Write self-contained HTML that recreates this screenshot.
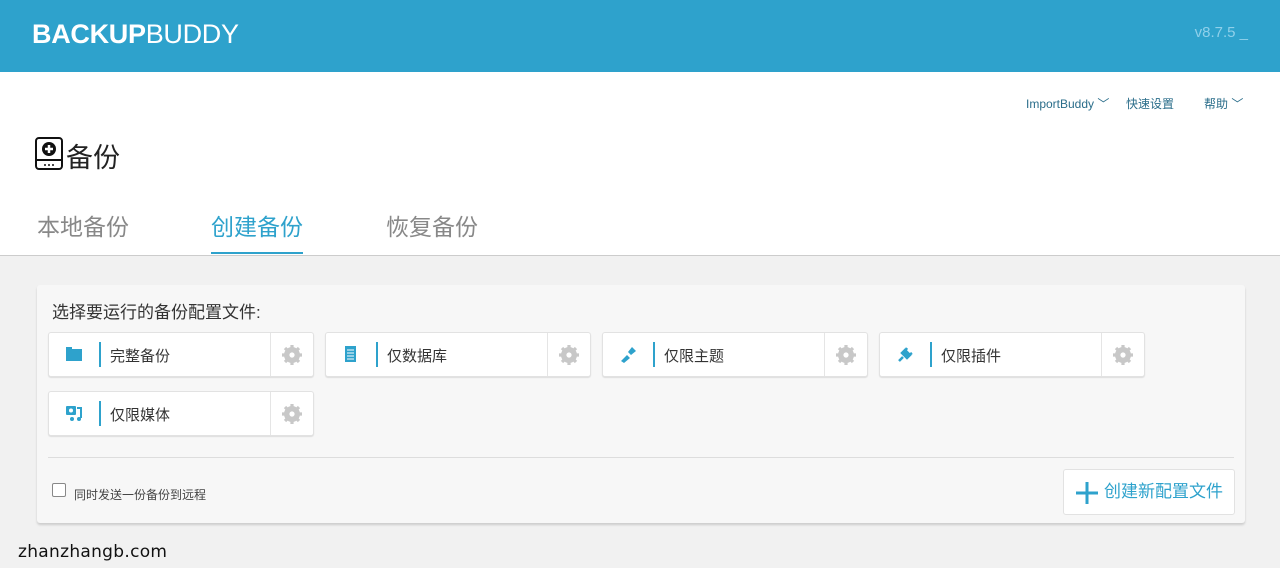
<!DOCTYPE html><html><head><meta charset="utf-8"><style>
body{margin:0;width:1280px;height:568px;overflow:hidden;background:#f1f1f1;font-family:"Liberation Sans","Noto Sans CJK SC",sans-serif;position:relative}
.hd{position:absolute;left:0;top:0;width:1280px;height:72px;background:#2ea2cc}
.logo{position:absolute;left:32px;top:19px;color:#fff;font-size:27px;letter-spacing:-0.3px}
.logo b{font-weight:900}
.ver{position:absolute;right:32px;top:24px;color:#8fd0ea;font-size:15px}
.wh{position:absolute;left:0;top:72px;width:1280px;height:183px;background:#fff;border-bottom:1px solid #ccc}
.nav{position:absolute;top:23px;font-size:12px;color:#2a6d8a}
.ttl{position:absolute;left:66px;font-size:27px;color:#222}
.tab{position:absolute;font-size:23px;color:#888}
.tab.a{color:#2ea2cc;border-bottom:2px solid #2ea2cc;padding-bottom:10px}
.pn{position:absolute;left:37px;top:285px;width:1208px;height:238px;background:#f7f7f7;border-radius:3px;box-shadow:0 2px 2px #ccc}
.pt{position:absolute;left:15px;top:13px;font-size:17px;color:#333}
.b{position:absolute;width:264px;height:43px;background:#fff;border:1px solid #e2e2e2;border-radius:3px;box-shadow:0 1px 1px #ddd}
.b .ic{position:absolute;left:16px;top:12px;width:18px;height:18px}
.b .bar{position:absolute;left:50px;top:9px;width:2px;height:25px;background:#2ea2cc}
.b .t{position:absolute;left:61px;top:12px;font-size:15px;color:#333}
.b .g{position:absolute;right:0;top:0;width:42px;height:43px;border-left:1px solid #e5e5e5}
.b .g svg{position:absolute;left:11px;top:12px}
.ln{position:absolute;left:11px;top:172px;width:1186px;height:1px;background:#ddd}
.cb{position:absolute;left:15px;top:198px;width:12px;height:12px;border:1px solid #888;border-radius:2px;background:#fff}
.cbt{position:absolute;left:37px;top:201px;font-size:12px;color:#444}
.cr{position:absolute;left:1026px;top:184px;width:170px;height:44px;background:#fff;border:1px solid #e2e2e2;border-radius:3px;color:#2ea2cc;font-size:17px;line-height:44px}
.wm{position:absolute;left:18px;top:542px;font-size:17px;color:#111;font-family:"DejaVu Sans",sans-serif;letter-spacing:0.3px}
</style></head><body>
<svg width="0" height="0" style="position:absolute"><defs><g id="gear"><circle cx="10" cy="10" r="6" fill="none" stroke="#c8c8c8" stroke-width="4"/><g stroke="#c8c8c8" stroke-width="3.2"><path d="M10 0v20M0 10h20M3 3l14 14M17 3L3 17"/></g><circle cx="10" cy="10" r="2.6" fill="#fff"/><circle cx="10" cy="10" r="5" fill="none" stroke="#c8c8c8" stroke-width="2.5"/></g></defs></svg>
<div class="hd"><div class="logo"><b>BACKUP</b>BUDDY</div><div class="ver">v8.7.5 _</div></div>
<div class="wh">
<div class="nav" style="left:1026px">ImportBuddy ﹀</div><div class="nav" style="left:1126px">快速设置</div><div class="nav" style="left:1204px">帮助 ﹀</div>
<svg style="position:absolute;left:35px;top:65px" width="28" height="33" viewBox="0 0 28 33"><rect x="1" y="1" width="26" height="31" rx="3" fill="#fff" stroke="#111" stroke-width="2"/><circle cx="14" cy="12" r="7" fill="#111"/><path d="M14 8v8M10 12h8" stroke="#fff" stroke-width="2.5"/><path d="M1 23h26" stroke="#111" stroke-width="2"/><circle cx="10" cy="28" r="1" fill="#111"/><circle cx="14" cy="28" r="1" fill="#111"/><circle cx="18" cy="28" r="1" fill="#111"/></svg>
<div class="ttl" style="top:64px">备份</div>
<div class="tab" style="left:37px;top:136px">本地备份</div>
<div class="tab a" style="left:211px;top:136px">创建备份</div>
<div class="tab" style="left:386px;top:136px">恢复备份</div>
</div>
<div class="pn">
<div class="pt">选择要运行的备份配置文件:</div>
<div class="b" style="left:11px;top:47px"><svg class="ic" viewBox="0 0 18 18"><path d="M1 2h6v2h10v12H1z" fill="#2ea2cc"/></svg><div class="bar"></div><div class="t">完整备份</div><div class="g"><svg width="20" height="20"><use href="#gear"/></svg></div></div>
<div class="b" style="left:288px;top:47px"><svg class="ic" viewBox="0 0 18 18"><rect x="3" y="1" width="11" height="16" fill="#2ea2cc"/><path d="M5 5h7M5 8h7M5 11h7M5 14h7" stroke="#fff"/></svg><div class="bar"></div><div class="t">仅数据库</div><div class="g"><svg width="20" height="20"><use href="#gear"/></svg></div></div>
<div class="b" style="left:565px;top:47px"><svg class="ic" viewBox="0 0 18 18"><path d="M2 16l6-6 3 3-6 5zM9 7l4-5 4 4-5 4z" fill="#2ea2cc"/></svg><div class="bar"></div><div class="t">仅限主题</div><div class="g"><svg width="20" height="20"><use href="#gear"/></svg></div></div>
<div class="b" style="left:842px;top:47px"><svg class="ic" viewBox="0 0 18 18"><path d="M3 16l4-4M6 8l5 5 3-3-5-5zM11 3l-2 3M16 8l-3 2" stroke="#2ea2cc" stroke-width="2.5" fill="#2ea2cc"/></svg><div class="bar"></div><div class="t">仅限插件</div><div class="g"><svg width="20" height="20"><use href="#gear"/></svg></div></div>
<div class="b" style="left:11px;top:106px"><svg class="ic" viewBox="0 0 18 18"><rect x="1" y="2" width="10" height="9" rx="1" fill="#2ea2cc"/><circle cx="6" cy="6.5" r="2" fill="#fff"/><path d="M12 4h4v10" stroke="#2ea2cc" stroke-width="2" fill="none"/><circle cx="14" cy="15" r="2" fill="#2ea2cc"/><circle cx="7" cy="15" r="2" fill="#2ea2cc"/></svg><div class="bar"></div><div class="t">仅限媒体</div><div class="g"><svg width="20" height="20"><use href="#gear"/></svg></div></div>
<div class="ln"></div>
<div class="cb"></div><div class="cbt">同时发送一份备份到远程</div>
<div class="cr"><svg style="position:absolute;left:12px;top:12px" width="22" height="22"><path d="M11 0v22M0 11h22" stroke="#2ea2cc" stroke-width="3"/></svg><span style="position:absolute;left:40px">创建新配置文件</span></div>
</div>
<div class="wm">zhanzhangb.com</div>
</body></html>
